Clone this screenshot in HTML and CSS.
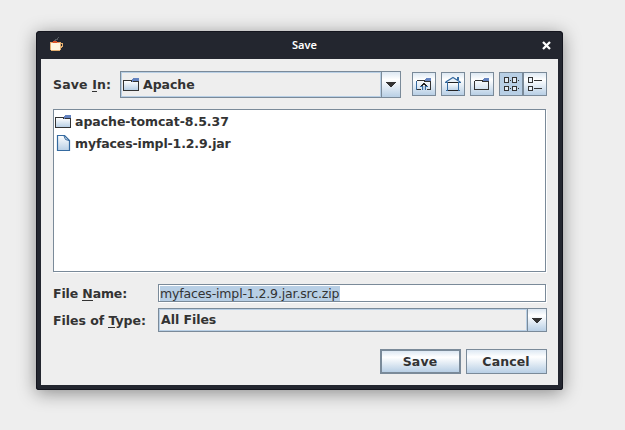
FILE: index.html
```html
<!DOCTYPE html>
<html lang="en">
<head>
<meta charset="utf-8">
<title>Save</title>
<link rel="stylesheet" href="styles.css">
</head>
<body>
<svg class="defs" width="0" height="0">
  <defs>
    <linearGradient id="fill" x1="0" y1="0" x2="0" y2="1"><stop offset="0" stop-color="#fff"/><stop offset="1" stop-color="#b8cfe5"/></linearGradient>
    <symbol id="folder" viewBox="0 0 16 16">
      <path fill="url(#fill)" d="M1 4h14v9H1z"/>
      <path fill="none" stroke="#333" d="M.5 13.500V3.500H8.500V4.500H15.500V13.500Z"/>
      <path fill="#6382bf" d="M10 1h6v3h-6v1H9V2h1z"/>
    </symbol>
  </defs>
</svg>
<main class="window">
  <header class="titlebar">
    <svg class="cup" width="14" height="15" viewBox="0 0 14 15" shape-rendering="crispEdges">
      <path fill="#555a60" d="M4 3h1V2h2V1h1v2H6v1H4zM8 0h1v1H8z"/>
      <path fill="#e2ae70" d="M0 5h11v1h2v4h-1v1h-1v2h-1v1H1v-1H0z"/>
      <path fill="#fff6e0" d="M1 6h9v7H1z"/>
      <path fill="#23262f" d="M11 7h1v2h-1z"/><path fill="#f08a50" d="M2 5h7v1H2z"/><path fill="#d8552c" d="M3 4h4v2H3z"/>
    </svg>
    <h1 class="title">Save</h1>
    <svg class="close" width="9" height="9" viewBox="0 0 9 9"><path d="M1 1l7 7M8 1L1 8" stroke="#fff" stroke-width="2.300"/></svg>
  </header>
  <section class="content">
    <div class="row top">
      <label class="label look">Save <u>I</u>n:</label>
      <div class="combo location"><div class="value"><svg width="16" height="16" shape-rendering="crispEdges"><use href="#folder"/></svg><span>Apache</span></div><div class="arrow"><svg width="10" height="5" shape-rendering="crispEdges"><path fill="#333" d="M0 0h10v1H9v1H8v1H7v1H6v1H4V4H3V3H2V2H1V1H0z"/></svg></div></div>
      <div class="tools">
        <button class="tool"><svg width="16" height="16" viewBox="0 0 16 16" shape-rendering="crispEdges"><path fill="none" stroke="#356aa0" d="M.5 14V5"/><path fill="none" stroke="#333" d="M1 4.500H8.500V5.500H14.500V13.500H11M1 13.500H5"/><path fill="#6382bf" d="M10 2h5v3H9V3h1z"/><path fill="#356aa0" d="M4 10h8v1H4zM6 10h4v4H6z"/><path fill="#b8cfe5" d="M7 10h2v4H7z"/><path fill="#222" d="M7 7h2v1h1v1h1v1H9V9H7v1H5V9h1V8h1z"/></svg></button>
        <button class="tool"><svg width="16" height="16" viewBox="0 0 16 16"><path fill="#eaf1f8" stroke="#356aa0" stroke-width="1.200" d="M.7 6L8 1.500L15.300 6"/><path fill="none" stroke="#356aa0" stroke-width="2" d="M13 1v3"/><g shape-rendering="crispEdges"><path fill="url(#fill)" d="M3 7h10v8H3z"/><path fill="none" stroke="#356aa0" d="M2.500 6V15M13.500 6V15M0 6.500H16M1 14.500H15"/><path fill="#222" d="M3 6h10v1H3zM3 14h10v1H3z"/></g></svg></button>
        <button class="tool"><svg width="16" height="16" viewBox="0 0 16 16" shape-rendering="crispEdges"><path fill="none" stroke="#333" d="M.5 4.500H8.500V5.500H14.500V13.500H.5V4.500"/><path fill="#6382bf" d="M10 2h5v3H9V3h1z"/></svg></button>
        <div class="views">
          <button class="tool on"><svg width="16" height="16" viewBox="0 0 16 16" shape-rendering="crispEdges"><g fill="#e4edf6" stroke="#333"><path d="M1.500 1.500h4v5h-4zM9.500 1.500h4v5h-4zM1.500 10.500h4v4h-4zM9.500 10.500h4v4h-4z"/></g><path fill="#333" d="M7 4h1v1H7zM15 4h1v1h-1zM7 12h1v1H7zM15 12h1v1h-1z"/></svg></button>
          <button class="tool"><svg width="16" height="16" viewBox="0 0 16 16" shape-rendering="crispEdges"><path fill="#eef4fb" stroke="#333" d="M1.500 1.500h4v5h-4zM1.500 10.500h4v4h-4z"/><path fill="#333" d="M7 4h8v1H7zM7 12h8v1H7z"/></svg></button>
        </div>
      </div>
    </div>
    <ul class="list">
      <li class="item"><svg width="16" height="16" shape-rendering="crispEdges"><use href="#folder"/></svg><span>apache-tomcat-8.5.37</span></li>
      <li class="item"><svg class="file" width="16" height="16" viewBox="0 0 16 16"><path fill="url(#fill)" stroke="#356aa0" stroke-width="1.200" d="M2.500.5H9.500L14.500 5.500V15.500H2.500Z"/><path fill="none" stroke="#356aa0" d="M9 1L10.500 4.500L14 5.500"/></svg><span class="jar">myfaces-impl-1.2.9.jar</span></li>
    </ul>
    <div class="row name">
      <label class="label drop tight">File <u>N</u>ame:</label>
      <div class="field"><span class="selected">myfaces-impl-1.2.9.jar.src.zip</span></div>
    </div>
    <div class="row type">
      <label class="label drop">Files of <u>T</u>ype:</label>
      <div class="combo filter"><div class="value"><span>All Files</span></div><div class="arrow"><svg width="10" height="5" shape-rendering="crispEdges"><path fill="#333" d="M0 0h10v1H9v1H8v1H7v1H6v1H4V4H3V3H2V2H1V1H0z"/></svg></div></div>
    </div>
    <footer class="actions">
      <button class="button default">Save</button>
      <button class="button">Cancel</button>
    </footer>
  </section>
</main>
</body>
</html>
```
FILE: styles.css
```css
* { box-sizing: border-box; }
body { margin: 0; padding: 31px 0 0 36px; height: 430px; overflow: hidden; background: #eee; color: #333; font: bold 12.5px/16px "DejaVu Sans", sans-serif; letter-spacing: -.04px; }
svg { display: block; flex: none; }
.defs { position: absolute; }
.window { width: 527px; height: 359px; padding: 0 5px 5px; background: #23262f; border-radius: 4px 4px 3px 3px; box-shadow: inset 0 0 0 1px #14151e, 0 3px 18px rgba(0,0,0,.42); }
.titlebar { display: grid; grid-template-columns: 60px 1fr 60px; align-items: center; height: 28px; letter-spacing: 0; }
.cup { margin: 0 0 1px 9px; }
.title { margin: 0 0 1px 10px; color: #fff; font: 600 11px/16px "Noto Sans", sans-serif; text-align: center; }
.close { justify-self: end; margin-right: 7px; }
.content { height: 326px; padding: 12px 11px 11px 12px; background: #eee; }
.row { display: flex; align-items: center; }
.label { width: 105px; white-space: nowrap; }
.look { width: 67px; letter-spacing: .15px; }
.drop { padding-top: 2px; }
.tight, .jar { letter-spacing: -.13px; }
u { text-decoration: none; box-shadow: inset 0 -1px #333; }
.top { height: 27px; }
.combo { display: flex; border: 1px solid #7a8a99; }
.location { width: 281px; height: 27px; }
.value { display: flex; align-items: center; flex: 1; gap: 4px; padding: 0 1px; border: 1px solid #b8cfe5; }
.arrow { display: flex; align-items: center; justify-content: center; width: 19px; border-left: 1px solid #7a8a99; background: linear-gradient(#dde8f3, #fff 30%, #b8cfe5); }
.tools { display: flex; align-self: flex-start; gap: 5px; margin: 1px 0 0 11px; }
.views { display: flex; }
.tool { display: flex; align-items: center; justify-content: center; width: 24px; height: 24px; padding: 0; border: 1px solid #7a8a99; background: linear-gradient(#dde8f3, #fff 30%, #b8cfe5); }
.on { background: #b8cfe5; }
.list { width: 493px; height: 163px; margin: 11px 0 12px; padding: 1px; list-style: none; border: 1px solid #7a8a99; background: #fff; box-shadow: 1px 1px #fff; }
.item { display: flex; align-items: center; gap: 4px; height: 22px; }
.file { margin-bottom: 2px; }
.name { height: 18px; }
.field { width: 388px; height: 18px; padding: 1px; border: 1px solid #7a8a99; background: #fff; box-shadow: 1px 1px #fff; font-weight: normal; line-height: 16px; letter-spacing: -.15px; white-space: nowrap; }
.selected { display: block; width: 180px; height: 15px; background: #b8cfe5; }
.type { height: 24px; margin-top: 6px; }
.filter { width: 389px; height: 24px; }
.actions { display: flex; justify-content: flex-end; gap: 5px; margin-top: 17px; }
.button { width: 81px; height: 25px; padding: 0 1px 0 0; border: 1px solid #7a8a99; background: linear-gradient(#dde8f3, #fff 30%, #b8cfe5); color: #333; font: inherit; letter-spacing: .1px; }
.default { border-width: 2px; }
```
